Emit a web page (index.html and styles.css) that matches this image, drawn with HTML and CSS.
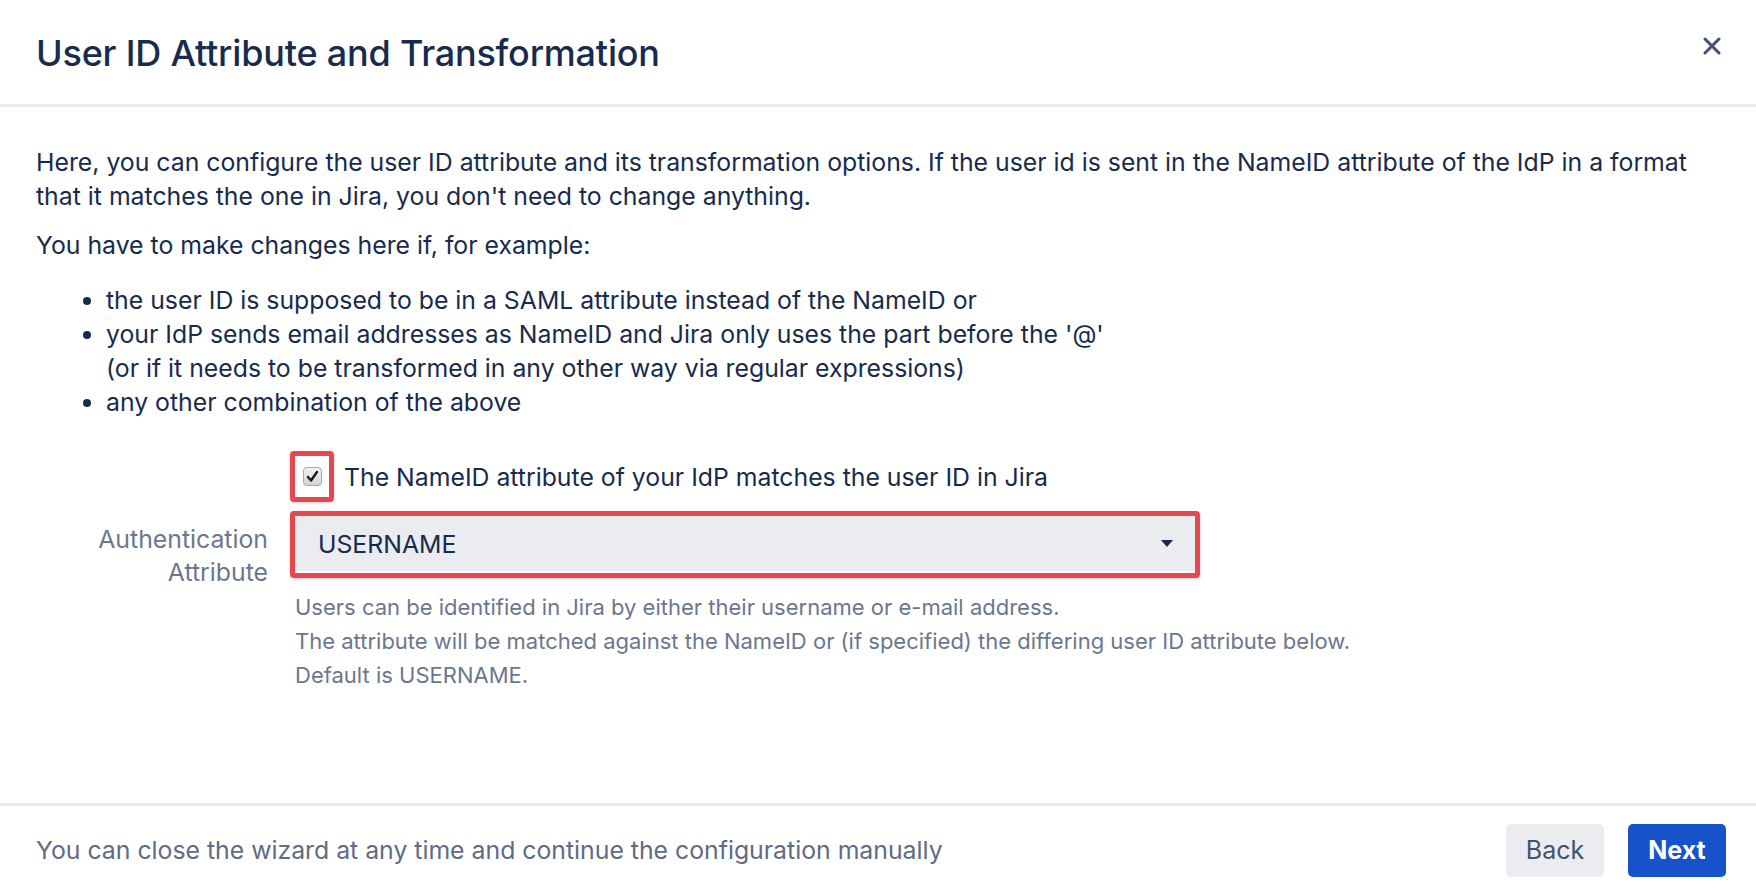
FILE: index.html
```html
<!DOCTYPE html>
<html lang="en">
<head>
    <meta charset="UTF-8">
    <title>User ID Attribute and Transformation</title>
    <link rel="stylesheet" href="styles.css">
</head>
<body>
    <div class="dialog">
        <!-- Header -->
        <header class="dialog-header">
            <h2>User ID Attribute and Transformation</h2>
            <button class="close" aria-label="Close">
                <svg width="20" height="20" viewBox="0 0 20 20">
                    <path d="M3 3 L17 17 M17 3 L3 17" stroke="#42526e" stroke-width="3" stroke-linecap="round"/>
                </svg>
            </button>
        </header>

        <!-- Content -->
        <div class="dialog-content">
            <p>Here, you can configure the user ID attribute and its transformation options. If the user id is sent in the NameID attribute of the IdP in a format that it matches the one in Jira, you don't need to change anything.</p>
            <p>You have to make changes here if, for example:</p>
            <ul>
                <li>the user ID is supposed to be in a SAML attribute instead of the NameID or</li>
                <li>your IdP sends email addresses as NameID and Jira only uses the part before the '@'<br>(or if it needs to be transformed in any other way via regular expressions)</li>
                <li>any other combination of the above</li>
            </ul>

            <form class="form">
                <div class="field-row check-row">
                    <div class="field-label"></div>
                    <div class="field-body">
                        <label class="check">
                            <span class="highlight check-mark">
                                <span class="box">
                                    <svg width="13" height="13" viewBox="0 0 13 13">
                                        <path d="M2 7 L5 10.5 L11 2" fill="none" stroke="#1a1a1a" stroke-width="2.4" stroke-linecap="round" stroke-linejoin="round"/>
                                    </svg>
                                </span>
                            </span>
                            The NameID attribute of your IdP matches the user ID in Jira
                        </label>
                    </div>
                </div>
                <div class="field-row">
                    <div class="field-label">Authentication Attribute</div>
                    <div class="field-body">
                        <div class="highlight select-wrap">
                            <div class="select">
                                <span>USERNAME</span>
                                <span class="arrow"></span>
                            </div>
                        </div>
                        <div class="description">
                            Users can be identified in Jira by either their username or e-mail address.<br>
                            The attribute will be matched against the NameID or (if specified) the differing user ID attribute below.<br>
                            Default is USERNAME.
                        </div>
                    </div>
                </div>
            </form>
        </div>

        <!-- Footer -->
        <footer class="dialog-footer">
            <span class="hint">You can close the wizard at any time and continue the configuration manually</span>
            <div class="actions">
                <button class="btn">Back</button>
                <button class="btn btn-primary">Next</button>
            </div>
        </footer>
    </div>
</body>
</html>
```

FILE: styles.css
```css
* {
    box-sizing: border-box;
    margin: 0;
    padding: 0;
}

html, body {
    height: 100%;
}

body {
    font-family: Inter, "Noto Sans", sans-serif;
    font-size: 24.8px;
    line-height: 34px;
    color: #172b4d;
    background: #fff;
}

.dialog {
    height: 100%;
    display: flex;
    flex-direction: column;
}

/* Header */
.dialog-header {
    height: 107px;
    border-bottom: 3px solid #ebecf0;
    display: flex;
    align-items: center;
    justify-content: space-between;
    padding: 0 32px 0 36px;
}

.dialog-header h2 {
    font-size: 36px;
    font-weight: 500;
    color: #172b4d;
    letter-spacing: -0.2px;
    margin-top: 2px;
}

.close {
    border: none;
    background: none;
    width: 24px;
    height: 24px;
    display: flex;
    align-items: center;
    justify-content: center;
    margin-bottom: 13px;
}

/* Content */
.dialog-content {
    flex: 1;
    padding: 38px 36px 0;
}

.dialog-content p {
    margin-bottom: 15px;
}

.dialog-content ul {
    margin-top: 21px;
    padding-left: 70px;
}

.form {
    margin-top: 32px;
}

.field-row {
    display: flex;
}

.check-row {
    margin-bottom: 9px;
}

.field-label {
    width: 232px;
    text-align: right;
    color: #6b778c;
    padding-top: 12px;
    line-height: 33px;
}

.field-body {
    padding-left: 22px;
    flex: 1;
}

.highlight {
    border: 5px solid #e5484d;
    border-radius: 4px;
    box-shadow: 0 1px 3px rgba(0, 0, 0, 0.2);
}

.check {
    display: flex;
    align-items: center;
    gap: 10px;
}

.check-mark {
    width: 44px;
    height: 51px;
    display: flex;
    align-items: center;
    justify-content: center;
}

.box {
    width: 19px;
    height: 19px;
    border: 1px solid #a8a8a8;
    border-radius: 4px;
    background: linear-gradient(#f2f2f2, #d4d4d4);
    display: flex;
    align-items: center;
    justify-content: center;
}

.select-wrap {
    width: 910px;
}

.select {
    height: 57px;
    background: #ebecf0;
    border-bottom: 2px solid #fafbfc;
    display: flex;
    align-items: center;
    justify-content: space-between;
    padding: 0 22px 0 23px;
}

.arrow {
    width: 0;
    height: 0;
    border-left: 6px solid transparent;
    border-right: 6px solid transparent;
    border-top: 7px solid #172b4d;
}

.description {
    font-size: 22px;
    line-height: 34px;
    color: #6b778c;
    margin-top: 12px;
    padding-left: 5px;
}

/* Footer */
.dialog-footer {
    height: 89px;
    border-top: 3px solid #ebecf0;
    display: flex;
    align-items: center;
    justify-content: space-between;
    padding: 2px 30px 0 36px;
}

.hint {
    color: #5e6c84;
}

.actions {
    display: flex;
    gap: 24px;
}

.btn {
    font-family: inherit;
    font-size: 25px;
    height: 53px;
    width: 98px;
    border: none;
    border-radius: 5px;
    background: #ebecf0;
    color: #42526e;
}

.btn-primary {
    background: #1652c9;
    color: #fff;
    font-weight: 700;
}
```
